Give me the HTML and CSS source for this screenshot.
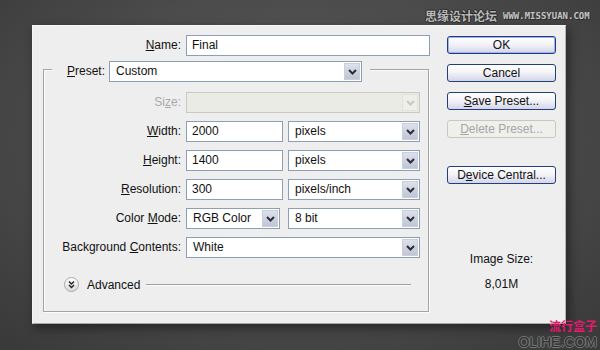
FILE: index.html
```html
<!DOCTYPE html>
<html lang="en">

<head>
    <meta charset="UTF-8">
    <title>New</title>
    <link rel="stylesheet" href="styles.css">
</head>

<body>

    <div class="dialog">
        <div class="form">
            <div class="name-row">
                <label class="lbl"><u>N</u>ame:</label>
                <div class="field">Final</div>
            </div>

            <div class="group">
                <div class="legend">
                    <label class="lbl legend-lbl"><u>P</u>reset:</label>
                    <div class="select preset">
                        <span>Custom</span>
                        <span class="arrow"><svg width="9" height="6" viewBox="0 0 9 6"><polyline points="1,1 4.5,4.5 8,1" /></svg></span>
                    </div>
                </div>

                <div class="rows">
                    <label class="lbl off">Si<u>z</u>e:</label>
                    <div class="select off">
                        <span></span>
                        <span class="arrow"><svg width="9" height="6" viewBox="0 0 9 6"><polyline points="1,1 4.5,4.5 8,1" /></svg></span>
                    </div>

                    <label class="lbl"><u>W</u>idth:</label>
                    <div class="pair">
                        <div class="field">2000</div>
                        <div class="select">
                            <span>pixels</span>
                            <span class="arrow"><svg width="9" height="6" viewBox="0 0 9 6"><polyline points="1,1 4.5,4.5 8,1" /></svg></span>
                        </div>
                    </div>

                    <label class="lbl"><u>H</u>eight:</label>
                    <div class="pair">
                        <div class="field">1400</div>
                        <div class="select">
                            <span>pixels</span>
                            <span class="arrow"><svg width="9" height="6" viewBox="0 0 9 6"><polyline points="1,1 4.5,4.5 8,1" /></svg></span>
                        </div>
                    </div>

                    <label class="lbl"><u>R</u>esolution:</label>
                    <div class="pair">
                        <div class="field">300</div>
                        <div class="select">
                            <span>pixels/inch</span>
                            <span class="arrow"><svg width="9" height="6" viewBox="0 0 9 6"><polyline points="1,1 4.5,4.5 8,1" /></svg></span>
                        </div>
                    </div>

                    <label class="lbl">Color <u>M</u>ode:</label>
                    <div class="pair">
                        <div class="select mode">
                            <span>RGB Color</span>
                            <span class="arrow"><svg width="9" height="6" viewBox="0 0 9 6"><polyline points="1,1 4.5,4.5 8,1" /></svg></span>
                        </div>
                        <div class="select">
                            <span>8 bit</span>
                            <span class="arrow"><svg width="9" height="6" viewBox="0 0 9 6"><polyline points="1,1 4.5,4.5 8,1" /></svg></span>
                        </div>
                    </div>

                    <label class="lbl">Background <u>C</u>ontents:</label>
                    <div class="select">
                        <span>White</span>
                        <span class="arrow"><svg width="9" height="6" viewBox="0 0 9 6"><polyline points="1,1 4.5,4.5 8,1" /></svg></span>
                    </div>
                </div>

                <div class="advanced">
                    <svg class="adv-icon" width="15" height="15" viewBox="0 0 15 15">
                        <defs>
                            <linearGradient id="advg" x1="0" y1="0" x2="0" y2="1">
                                <stop offset="0" stop-color="#ffffff" />
                                <stop offset="1" stop-color="#d9d9d9" />
                            </linearGradient>
                        </defs>
                        <circle cx="7.5" cy="7.5" r="7" fill="url(#advg)" stroke="#a8a8a8" />
                        <polyline points="5,4.5 7.5,7 10,4.5" fill="none" stroke="#222" stroke-width="1.4" />
                        <polyline points="5,8 7.5,10.5 10,8" fill="none" stroke="#222" stroke-width="1.4" />
                    </svg>
                    <span>Advanced</span>
                    <span class="rule"></span>
                </div>
            </div>
        </div>

        <div class="side">
            <div class="btn ok">OK</div>
            <div class="btn">Cancel</div>
            <div class="btn"><u>S</u>ave Preset...</div>
            <div class="btn off"><u>D</u>elete Preset...</div>
            <div class="btn device">D<u>e</u>vice Central...</div>
            <div class="size-title">Image Size:</div>
            <div class="size-value">8,01M</div>
        </div>
    </div>

    <div class="mark-top">
        <span class="mark-cn">思缘设计论坛</span>
        <span class="mark-url">WWW.MISSYUAN.COM</span>
    </div>

    <div class="mark-bottom">
        <span class="mark-pink">流行盒子</span>
        <span class="mark-olihe">OLIHE.COM</span>
    </div>

</body>

</html>
```

FILE: styles.css
```css
* {
    box-sizing: border-box;
}

body {
    margin: 0;
    width: 600px;
    height: 350px;
    overflow: hidden;
    position: relative;
    padding-top: 25px;
    font-family: "Liberation Sans", Arial, sans-serif;
    font-size: 12px;
    color: #111;
    background: radial-gradient(ellipse 70% 80% at 50% 40%, #5c5c5c 0%, #4b4b4b 55%, #3a3a3a 100%);
}

u {
    text-decoration-thickness: 1px;
    text-underline-offset: 1px;
}

.dialog {
    margin-left: 32px;
    width: 534px;
    height: 299px;
    display: flex;
    gap: 17px;
    padding: 9px 9px 0 10px;
    background: #eeeeee;
    border: 1px solid #f6f6f6;
    border-right-color: #b4b4b4;
    border-bottom-color: #a8a8a8;
    box-shadow: 3px 4px 10px rgba(0, 0, 0, 0.45);
}

.form {
    width: 387px;
}

.lbl {
    text-align: right;
    line-height: 21px;
    white-space: nowrap;
}

.lbl.off {
    color: #a9a9a9;
}

.name-row {
    display: grid;
    grid-template-columns: 138px 244px;
    column-gap: 5px;
    height: 21px;
}

.field {
    height: 21px;
    border: 1px solid #8d9fb6;
    background: #fff;
    padding-left: 5px;
    line-height: 19px;
}

.select {
    height: 21px;
    display: flex;
    align-items: stretch;
    border: 1px solid #8d9fb6;
    background: #fff;
    padding-left: 6px;
    line-height: 19px;
}

.select > span:first-child {
    flex: 1;
    overflow: hidden;
    white-space: nowrap;
}

.arrow {
    width: 16px;
    margin: 1px;
    display: flex;
    align-items: center;
    justify-content: center;
    background: linear-gradient(#dde1ec, #bfc5d4);
    border: 1px solid #c9cfdd;
}

.arrow polyline {
    fill: none;
    stroke: #2b2e3a;
    stroke-width: 2;
}

.select.off {
    background: #ebebe6;
    border-color: #cbc9bf;
}

.select.off .arrow {
    background: #eeeeea;
    border-color: #e2e2dc;
}

.select.off .arrow polyline {
    stroke: #c8c8c4;
}

.group {
    margin-top: 13px;
    width: 386px;
    height: 243px;
    border: 1px solid #a4a4a4;
    box-shadow: 1px 1px 0 #fbfbfb, inset 1px 1px 0 #fbfbfb;
}

.legend {
    display: flex;
    width: fit-content;
    gap: 4px;
    margin: -9px 0 0 8px;
    padding: 0 8px 0 14px;
    background: #eeeeee;
}

.legend-lbl {
    width: 39px;
}

.preset {
    width: 253px;
}

.rows {
    margin-top: 10px;
    display: grid;
    grid-template-columns: 137px 234px;
    grid-auto-rows: 21px;
    column-gap: 5px;
    row-gap: 8px;
}

.pair {
    display: grid;
    grid-template-columns: 97px 132px;
    justify-content: space-between;
}

.pair .mode {
    width: 94px;
}

.advanced {
    margin: 19px 17px 0 20px;
    display: flex;
    align-items: center;
    height: 15px;
}

.advanced span {
    margin-left: 8px;
    font-size: 12px;
}

.advanced .rule {
    flex: 1;
    height: 1px;
    margin-left: 6px;
    background: #9e9e9e;
    box-shadow: 0 1px 0 #fbfbfb;
}

.side {
    width: 109px;
    display: flex;
    flex-direction: column;
}

.btn {
    height: 18px;
    margin-top: 10px;
    border: 1px solid #233f78;
    border-radius: 3px;
    background: linear-gradient(#ffffff 0%, #f4f4f8 45%, #d3d5e9 100%);
    text-align: center;
    line-height: 16px;
    color: #111;
}

.btn.ok {
    margin-top: 1px;
    border-color: #1f3b82;
    box-shadow: inset 0 0 0 1px #9fb4ea;
}

.btn.off {
    border-color: #cac8bc;
    background: #efefec;
    color: #a6a6a6;
}

.btn.device {
    margin-top: 28px;
}

.size-title {
    margin-top: 68px;
    line-height: 14px;
    text-align: center;
}

.size-value {
    margin-top: 11px;
    line-height: 14px;
    text-align: center;
}

.mark-top {
    position: absolute;
    top: 7px;
    left: 425px;
    display: flex;
    align-items: center;
    gap: 6px;
}

.mark-cn {
    font-family: "Noto Sans CJK SC", sans-serif;
    font-size: 12px;
    font-weight: bold;
    color: #b9b9b9;
    text-shadow: 1px 0 0 #2a2a2a, -1px 0 0 #2a2a2a, 0 1px 0 #2a2a2a, 0 -1px 0 #2a2a2a;
}

.mark-url {
    font-family: "DejaVu Sans Mono", monospace;
    font-size: 9px;
    font-weight: bold;
    color: #c4c4c4;
    text-shadow: 1px 1px 0 #2a2a2a;
}

.mark-bottom {
    position: absolute;
    top: 319px;
    left: 520px;
    width: 80px;
    display: flex;
    flex-direction: column;
    align-items: flex-end;
    gap: 4px;
    padding-right: 3px;
}

.mark-pink {
    font-family: "Noto Sans CJK SC", sans-serif;
    font-size: 12px;
    font-weight: bold;
    line-height: 13px;
    color: #e01a6c;
}

.mark-olihe {
    font-family: "Liberation Sans", Arial, sans-serif;
    font-size: 14px;
    line-height: 12px;
    color: #2e2e2e;
    text-shadow: 1px 0 0 #777, -1px 0 0 #777, 0 1px 0 #777, 0 -1px 0 #777;
}
```
